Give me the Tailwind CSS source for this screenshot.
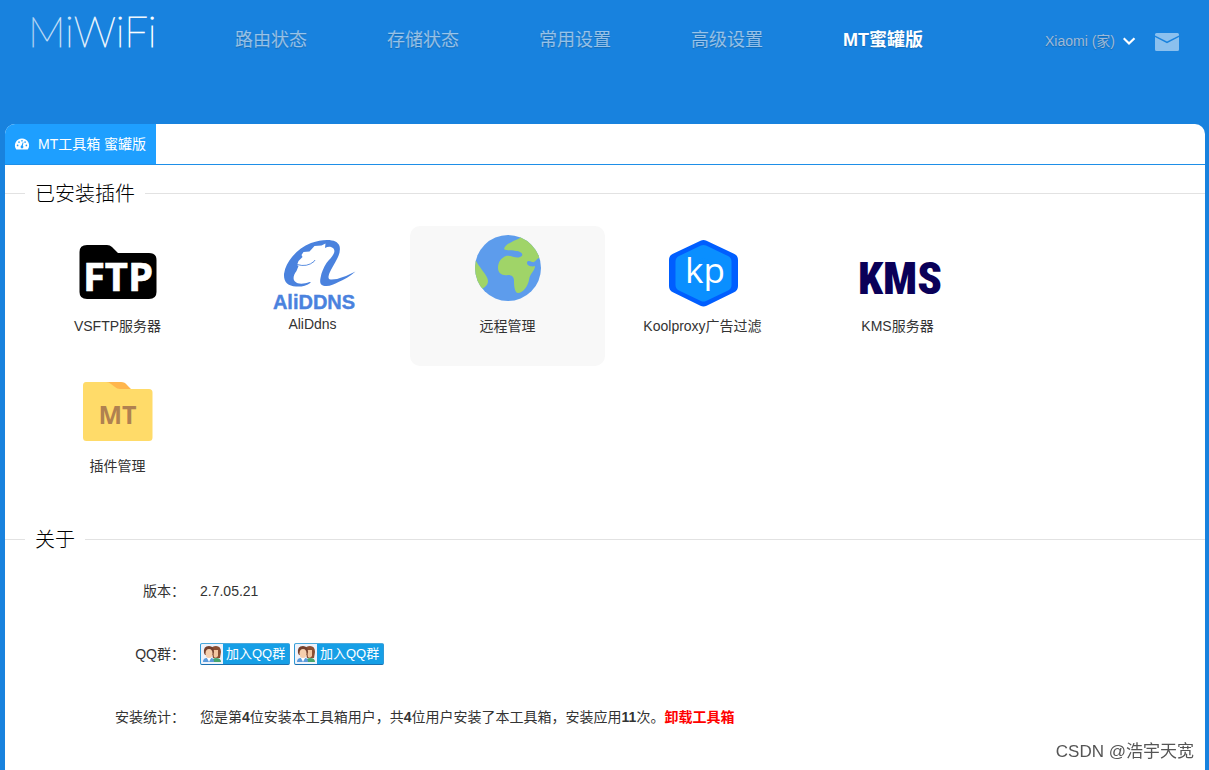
<!DOCTYPE html>
<html lang="zh-CN">
<head>
<meta charset="utf-8">
<title>MiWiFi</title>
<script src="https://cdn.jsdelivr.net/npm/@tailwindcss/browser@4"></script>
</head>
<body class="flex min-h-screen flex-col bg-[#1882de] font-['Liberation_Sans','Noto_Sans_CJK_SC',sans-serif] text-sm text-[#333]">
<header class="flex h-31 items-start pl-[27px] pr-[30px]">
  <a href="#" class="w-[208px]" aria-label="MiWiFi">
    <svg class="block" width="150" height="64" viewBox="-4 -4 150 64" role="img">
      <defs>
        <linearGradient id="fade" gradientUnits="userSpaceOnUse" x1="0" y1="0" x2="110" y2="0">
          <stop offset="0" stop-color="#fff" stop-opacity=".5"/>
          <stop offset="1" stop-color="#fff"/>
        </linearGradient>
      </defs>
      <text x="-3" y="43" font-family="Lato" font-weight="200" font-size="42" fill="url(#fade)" stroke="url(#fade)" stroke-width=".8">MiWiFi</text>
    </svg>
  </a>
  <nav class="mt-[26px] flex gap-20 text-lg leading-7 text-white/55 text-shadow-xs">
    <a href="#">路由状态</a>
    <a href="#">存储状态</a>
    <a href="#">常用设置</a>
    <a href="#">高级设置</a>
    <a href="#" class="font-bold text-white">MT蜜罐版</a>
  </nav>
  <div class="ml-auto mt-[31px] flex items-center">
    <button class="flex items-center gap-2 leading-5 text-[#9fb9d6] text-shadow-xs">Xiaomi (家)
      <svg width="14" height="9" viewBox="0 0 14 9" fill="none" stroke="#fff" stroke-width="2.2"><path d="M.7 1.200 6 6.500l5.500-5.300"/></svg>
    </button>
    <button class="ml-[18px]" aria-label="消息">
      <svg class="mt-[2px] block" width="24" height="18" viewBox="0 0 24 18"><path fill="#8bc0ee" d="M1.500 0h21Q24 0 24 1.500v.9L12 8.500 0 2.400v-.9Q0 0 1.500 0zM0 4l12 6.200L24 4v12.500q0 1.500-1.500 1.500h-21Q0 18 0 16.500z"/></svg>
    </button>
  </div>
</header>

<main class="ml-[5px] mr-1 grow overflow-hidden rounded-t-[10px] bg-white">
  <div class="flex border-b border-[#1e8fe8]">
    <a href="#" class="flex h-10 items-center gap-2 bg-[#1e9fff] pl-[9px] pr-[10px] text-white">
      <svg width="16" height="14" viewBox="-.5 -.5 17 15"><path fill="#fff" d="M8 1a7.500 7.500 0 0 0-6.300 11.600q.3.400.8.400h11q.5 0 .8-.4A7.500 7.500 0 0 0 8 1z"/><g fill="#1e9fff"><circle cx="3.300" cy="8.500" r=".9"/><circle cx="4.800" cy="4.900" r=".9"/><circle cx="8" cy="3.500" r=".9"/><circle cx="11.300" cy="4.900" r=".9"/><circle cx="12.700" cy="8.500" r=".9"/><circle cx="8" cy="10.200" r="1.500"/><path d="m7.300 9.500 1.500-4.500.8.300-1 4.600z"/></g></svg>
      MT工具箱 蜜罐版
    </a>
  </div>

  <section>
    <div class="mt-[13px] flex items-center">
      <span class="h-px w-5 bg-[#e2e2e2]"></span>
      <h2 class="px-[10px] pt-[2px] text-xl leading-7 font-light text-black">已安装插件</h2>
      <span class="h-px grow bg-[#e2e2e2]"></span>
    </div>
    <ul class="mt-[18px] flex flex-wrap pl-[15px] pr-5 leading-5">
      <li class="h-35 w-[195px]"><a href="#" class="flex flex-col items-center">
        <svg width="90" height="90" viewBox="0 0 90 90"><path fill="#000" d="M14 19h20q3 0 5 2l6 6h31q7.500 0 7.500 7v32q0 7-7.500 7H14q-7.500 0-7.500-7V26q0-7 7.500-7z"/><text x="45" y="65" text-anchor="middle" font-family="Open Sans" font-weight="700" font-size="40" fill="#fff" stroke="#fff" stroke-width=".6">FTP</text></svg>
        <span>VSFTP服务器</span></a></li>
      <li class="h-35 w-[195px]"><a href="#" class="flex flex-col items-center">
        <svg width="94" height="88" viewBox="-2 0 94 88"><path fill="#4a82de" d="M43 56.500C38 60 33 61 28 60.500 20 60 15.500 56 16 48c1-7 4-12 8-17 5-6 11-11 19-14 6-2 11-3 16-3 7 0 11 2 12.500 6 1 4 0 8-2 12-3 6-6 10-8 15-1 3-2 6 1 6.500 7 .5 16-3.500 25-8-6 5-11 8-17 10.500-4 2-8 4-12 4-6 0-7-3-6-8 1-6 3-10 6-15 3-4 6-6 7.500-10 1-3 0-5-3-6-2-.5-4 0-6 1l.5-4.500-4 2-7 .5-5 5.500-6 .5-2 3 1 2-4 4-1.500 4 1.500 1-2 5c-3 4-4 8-1.500 10.500 3 3 9 2.500 14.500.5z"/><path fill="none" stroke="#4a82de" stroke-width=".9" d="M29 38.500q10 3 17-3l1-1.500"/><text x="46" y="83" text-anchor="middle" font-family="Liberation Sans" font-weight="700" font-size="20" fill="#4a82de" stroke="#4a82de" stroke-width=".4">AliDDNS</text></svg>
        <span>AliDdns</span></a></li>
      <li class="h-35 w-[195px] rounded-[10px] bg-[#f8f8f8]"><a href="#" class="flex flex-col items-center">
        <svg width="90" height="90" viewBox="0 0 90 90"><defs><clipPath id="disc"><circle cx="45" cy="42" r="33"/></clipPath></defs><circle cx="45" cy="42" r="33" fill="#5d9cec"/><g clip-path="url(#disc)"><path fill="#a0d468" d="M58 8 57 12C51 15 42 18 41 23c2 2 7 1 12 2 5 0 9 4 4 6-4 2-9-2-14-1-5 2-8 6-8 12 0 5 4 8 10 7 4 0 6 2 6 6 0 6 1 12 4 12 5 0 10-7 11-13 1-7 6-9 6-14-3 1-8 0-8-3s3-2 5-1c4 1 3-3 9-5L82 8zM8 31c4 0 5 5 9 10 4 6 8 10 8 14 0 5-4 6-7 9L5 62z"/></g></svg>
        <span>远程管理</span></a></li>
      <li class="h-35 w-[195px]"><a href="#" class="flex flex-col items-center">
        <svg width="90" height="90" viewBox="0 0 90 90" stroke-linejoin="round"><path fill="#005eff" stroke="#005eff" stroke-width="14" d="m45.500 21 27.500 13v26L45.500 73.500 18 60V34z"/><path fill="#0a8fff" stroke="#0a8fff" stroke-width="12" d="m45.500 25 22 10.500v23.500l-22 10.500L23.500 59V35.500z"/><text x="47" y="57" text-anchor="middle" font-family="Open Sans" font-size="35" fill="#fff">kp</text></svg>
        <span>Koolproxy广告过滤</span></a></li>
      <li class="h-35 w-[195px]"><a href="#" class="flex flex-col items-center">
        <svg width="90" height="90" viewBox="0 0 90 90"><text x="47" y="68" text-anchor="middle" font-family="Roboto Condensed, Roboto, sans-serif" font-weight="900" font-size="45" fill="#0a0058">KMS</text></svg>
        <span>KMS服务器</span></a></li>
      <li class="h-35 w-[195px]"><a href="#" class="flex flex-col items-center">
        <svg width="90" height="90" viewBox="0 0 90 90"><path fill="#ffb64d" d="M28 16h20q4 0 6 3l6 6H36z"/><path fill="#ffdb69" d="M13 16h20q3 0 5 2l4 3q2 2 5 2h29q3.500 0 3.500 3.500v45q0 3.500-3.500 3.500H13.500q-3.500 0-3.500-3.500v-52Q10 16 13 16z"/><text x="44.500" y="58" text-anchor="middle" font-family="Open Sans" font-weight="700" font-size="25" fill="#b08150">MT</text></svg>
        <span>插件管理</span></a></li>
    </ul>
  </section>

  <section>
    <div class="mt-[18px] flex items-center">
      <span class="h-px w-5 bg-[#e2e2e2]"></span>
      <h2 class="px-[10px] pt-[2px] text-xl leading-7 font-light text-black">关于</h2>
      <span class="h-px grow bg-[#e2e2e2]"></span>
    </div>
    <dl class="mt-[26px] grid grid-cols-[180px_1fr] items-center gap-x-[15px] gap-y-[41px] leading-[22px]">
      <dt class="text-right">版本：</dt>
      <dd>2.7.05.21</dd>
      <dt class="text-right">QQ群：</dt>
      <dd class="flex gap-1">
        <a href="#" class="flex h-[22px] w-[90px] items-center overflow-hidden rounded-xs border border-x-[#2f9ad8] border-t-[#4aa9dc] border-b-[#1b6fae] bg-[#169fe6] text-[13px] text-white">
          <svg class="mr-[3px] shrink-0" width="22" height="20" viewBox="0 0 22 20"><path fill="#eef2fa" d="M0 0h22v20H0z"/><path fill="#8a4f33" d="M10 5q1-3 5-3 5 0 5 6l-1 6h-7z"/><path fill="#46a56c" d="M11 18q0-4 4-4 5 0 5 4z"/><path fill="#f3c6a0" d="M12 6h5v6q-2 3-4 1z"/><path fill="#74402d" d="M3 9q-1-7 5-7 5 0 5 6l-1 3H4z"/><ellipse cx="8" cy="9.500" rx="3.500" ry="4.500" fill="#f6cfae"/><path fill="#5b9bdc" d="M2 18q0-4 4-4l2 2 2-2q3 0 3 4z"/><path fill="#fff" d="m6 14 2 4 2-4z"/></svg>加入QQ群</a>
        <a href="#" class="flex h-[22px] w-[90px] items-center overflow-hidden rounded-xs border border-x-[#2f9ad8] border-t-[#4aa9dc] border-b-[#1b6fae] bg-[#169fe6] text-[13px] text-white">
          <svg class="mr-[3px] shrink-0" width="22" height="20" viewBox="0 0 22 20"><path fill="#eef2fa" d="M0 0h22v20H0z"/><path fill="#8a4f33" d="M10 5q1-3 5-3 5 0 5 6l-1 6h-7z"/><path fill="#46a56c" d="M11 18q0-4 4-4 5 0 5 4z"/><path fill="#f3c6a0" d="M12 6h5v6q-2 3-4 1z"/><path fill="#74402d" d="M3 9q-1-7 5-7 5 0 5 6l-1 3H4z"/><ellipse cx="8" cy="9.500" rx="3.500" ry="4.500" fill="#f6cfae"/><path fill="#5b9bdc" d="M2 18q0-4 4-4l2 2 2-2q3 0 3 4z"/><path fill="#fff" d="m6 14 2 4 2-4z"/></svg>加入QQ群</a>
      </dd>
      <dt class="text-right">安装统计：</dt>
      <dd>您是第<b>4</b>位安装本工具箱用户，共<b>4</b>位用户安装了本工具箱，安装应用<b>11</b>次。<a href="#" class="font-bold text-[#f00]">卸载工具箱</a></dd>
    </dl>
  </section>
</main>
<p class="fixed right-[15px] bottom-1 text-[17px] leading-7 text-[#555]">CSDN @浩宇天宽</p>
</body>
</html>
